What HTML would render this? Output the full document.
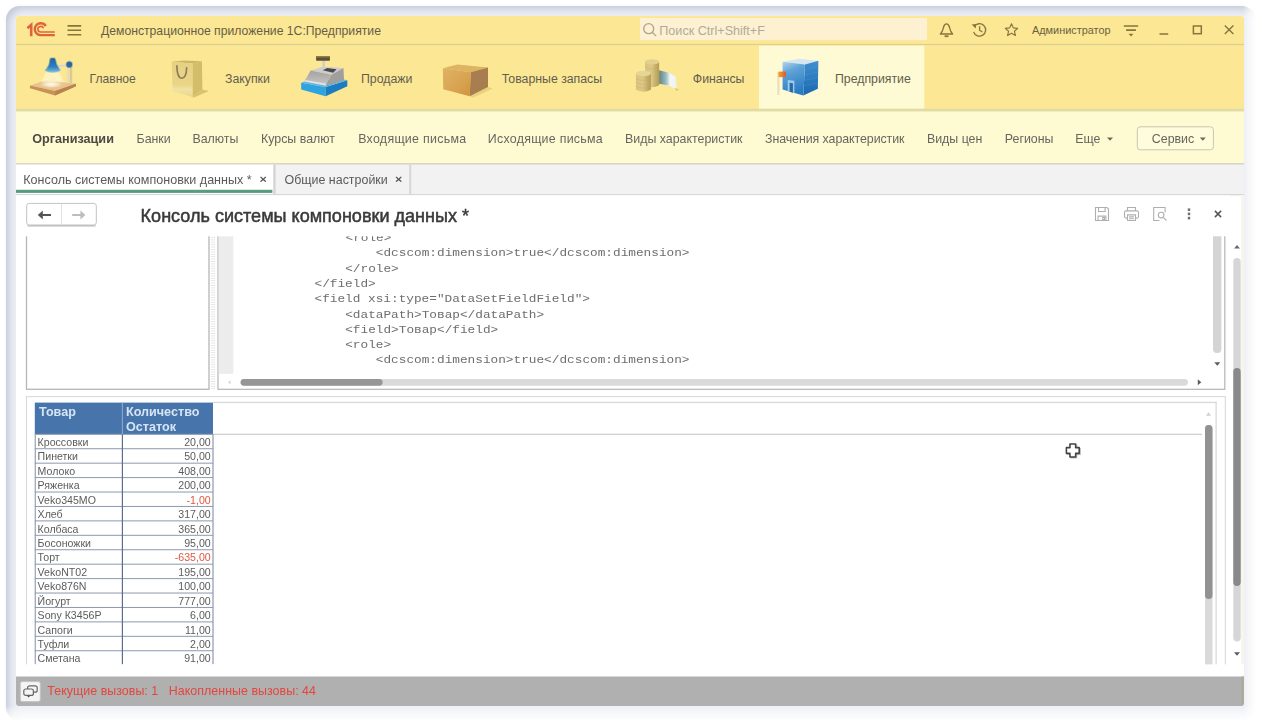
<!DOCTYPE html>
<html lang="ru">
<head>
<meta charset="utf-8">
<title>Консоль системы компоновки данных</title>
<style>
*{box-sizing:border-box;margin:0;padding:0}
html,body{width:1262px;height:724px;overflow:hidden;background:#fff}
body{font-family:"Liberation Sans",sans-serif;position:relative;color:#4a4a4a}
#frame{position:absolute;left:6px;top:6px;width:1251px;height:715px;border-radius:14px 16px 18px 14px;background:#eceef4;
 box-shadow:inset 4px 4px 7px -1px rgba(158,164,196,.52),0 0 3px rgba(240,241,247,.9)}
#fade{position:absolute;left:0;top:0;width:1262px;height:724px;
 background:linear-gradient(to right,rgba(255,255,255,0) 1243px,rgba(255,255,255,.55) 1249px,#fff 1256px),
 linear-gradient(to bottom,rgba(255,255,255,0) 705px,rgba(255,255,255,.55) 713px,#fff 721px)}
#app{position:absolute;left:16px;top:16px;width:1228px;height:690px;border-radius:3px;overflow:hidden;background:#fff;filter:blur(.7px)}
.t{position:absolute;white-space:pre}
svg.l{position:absolute;left:0;top:0;overflow:hidden}
.mono{font-family:"Liberation Mono",monospace}
</style>
</head>
<body>
<div id="frame"></div>
<div id="fade"></div>
<div id="app">

<svg class="l" width="1228" height="690" viewBox="0 0 1228 690">
<rect x="0.00" y="0.00" width="1228.00" height="29.00" fill="#fce795"/>
<rect x="0.00" y="27.90" width="1228.00" height="1.70" fill="#e0cf80"/>
<rect x="0.00" y="29.60" width="1228.00" height="64.40" fill="#fce795"/>
<rect x="743.00" y="29.60" width="165.30" height="63.40" fill="#fefad3"/>
<rect x="0.00" y="92.70" width="1228.00" height="3.00" fill="#e2dba2"/>
<rect x="0.00" y="95.70" width="1228.00" height="51.70" fill="#fefbd3"/>
<rect x="0.00" y="147.20" width="1228.00" height="1.60" fill="#cfccbc"/>
<rect x="0.00" y="148.60" width="1228.00" height="29.40" fill="#f2f2f2"/>
<rect x="0.00" y="178.00" width="1228.00" height="1.40" fill="#d8d8d8"/>
<rect x="624.00" y="2.00" width="287.00" height="22.20" fill="#fdf1d2"/>
<svg x="0.00" y="-2.00" width="60" height="30" viewBox="0 0 378.6 189.3" overflow="visible"><g fill="none" stroke="#e0643a">
<path d="M72 90 L96 68 V140" stroke-width="16"/>
<path d="M188 76 A37.5 37.5 0 1 0 154 133.5 H245" stroke-width="15"/>
<path d="M173 90 A18 18 0 1 0 156 114 H245" stroke-width="10"/></g></svg>
<path transform="translate(-16,-16)" d="M67.5 25.9H81.2M67.5 30.3H81.2M67.5 34.8H81.2" fill="none" stroke="#857639" stroke-width="1.6" />
<svg x="626.50" y="6.50" width="15" height="15" viewBox="0 0 15 15" overflow="visible"><g fill="none" stroke="#aaa590" stroke-width="1.3"><circle cx="6.2" cy="6.2" r="5"/><path d="M9.8 9.8 L13.6 13.6"/></g></svg>
<svg x="923.00" y="6.80" width="15" height="15" viewBox="0 0 15 15" overflow="visible"><g fill="none" stroke="#84763d" stroke-width="1.35" stroke-linejoin="round"><path d="M1.4 11.2 C3.8 8.8 4 6.4 4.6 4.2 C5.1 2.2 6.2 1 7.5 1 C8.8 1 9.9 2.2 10.4 4.2 C11 6.4 11.2 8.8 13.6 11.2 Z"/><path d="M5.6 13.4 H9.4" stroke-width="1.8"/></g></svg>
<svg x="955.00" y="6.40" width="16" height="15" viewBox="0 0 16 15" overflow="visible"><g fill="none" stroke="#84763d" stroke-width="1.3"><path d="M3.2 4.2 A6.2 6.2 0 1 1 2.6 9.6"/><path d="M8.6 3.8 V7.8 L11.4 9.6"/></g><path d="M0.6 2.2 L4.8 6 L5 1.6 Z" fill="#84763d"/></svg>
<svg x="988.20" y="6.60" width="14.6" height="14" viewBox="0 0 16 15" overflow="visible"><path d="M8 1.2 L10 5.6 L14.8 6.1 L11.2 9.3 L12.3 14 L8 11.5 L3.7 14 L4.8 9.3 L1.2 6.1 L6 5.6 Z" fill="none" stroke="#84763d" stroke-width="1.25" stroke-linejoin="round"/></svg>
<svg x="1107.80" y="8.90" width="14.4" height="12" viewBox="0 0 15 12" overflow="visible"><g stroke="#84763d" stroke-width="1.6"><path d="M0 1H15M2.4 5.2H12.6"/></g><path d="M5 8.9 H10 L7.5 11.8 Z" fill="#84763d"/></svg>
<path transform="translate(-16,-16)" d="M1159.5 34.0H1168.2" fill="none" stroke="#84763d" stroke-width="1.6" />
<rect x="1177.40" y="10.00" width="7.90" height="7.70" fill="none" stroke="#84763d" stroke-width="1.5"/>
<path transform="translate(-16,-16)" d="M1224.8 25.6 L1233.4 34.0 M1233.4 25.6 L1224.8 34.0" fill="none" stroke="#84763d" stroke-width="1.4" />
<svg x="10" y="32" width="70" height="60" viewBox="0 0 845 724" overflow="visible"><defs><filter id="b26" x="-10%" y="-10%" width="120%" height="120%"><feGaussianBlur stdDeviation="8"/></filter><radialGradient id="glow" cx="50%" cy="50%" r="50%"><stop offset="0" stop-color="#fffdf3"/><stop offset=".55" stop-color="#f6e3bd" stop-opacity=".9"/><stop offset="1" stop-color="#e6c18a" stop-opacity="0"/></radialGradient><linearGradient id="shade" x1="0" y1="0" x2="0" y2="1"><stop offset="0" stop-color="#22629f"/><stop offset=".6" stop-color="#2f7fc0"/><stop offset="1" stop-color="#7cc0e2"/></linearGradient></defs><g filter="url(#b26)">
<polygon points="48,452 235,388 602,432 352,520" fill="#e7c38d"/>
<polygon points="48,452 352,520 602,432 602,462 352,572 48,486" fill="#c9915a"/>
<polygon points="352,520 602,432 602,462 352,572" fill="#b98350"/>
<ellipse cx="305" cy="438" rx="165" ry="52" fill="url(#glow)"/>
<polygon points="235,295 405,295 455,410 185,410" fill="#fff8d2" opacity=".7"/>
<rect x="495" y="225" width="56" height="195" fill="#e9dcae"/>
<rect x="535" y="225" width="16" height="195" fill="#cdbb86"/>
<path d="M380 205 L520 190 L520 215 L385 232 Z" fill="#d9d6cf"/>
<circle cx="522" cy="198" r="38" fill="#2a65a2"/>
<path d="M290 125 Q322 112 352 125 L372 200 Q395 240 418 272 Q322 318 226 272 Q262 232 276 200 Z" fill="url(#shade)"/>
</g></svg>
<svg x="140" y="32" width="70" height="60" viewBox="0 0 845 724" overflow="visible"><defs><filter id="b156" x="-10%" y="-10%" width="120%" height="120%"><feGaussianBlur stdDeviation="8"/></filter><linearGradient id="bagf" x1="0" y1="0" x2="0" y2="1"><stop offset="0" stop-color="#e6d083"/><stop offset=".65" stop-color="#e9d588"/><stop offset=".78" stop-color="#f1e2a3"/><stop offset="1" stop-color="#ead68c"/></linearGradient></defs><g filter="url(#b156)">
<polygon points="560,500 640,520 450,600 440,590" fill="#d8c26e"/>
<polygon points="190,165 335,150 555,160 440,187" fill="#cdb766"/>
<polygon points="440,187 555,160 560,500 440,592" fill="#d3bc6a"/>
<polygon points="190,165 440,187 440,592 200,520" fill="url(#bagf)"/>
<path d="M252 215 Q255 365 312 365 Q365 365 370 238" fill="none" stroke="#8b7d55" stroke-width="20" stroke-linecap="round"/>
</g></svg>
<svg x="274" y="32" width="70" height="60" viewBox="0 0 845 724" overflow="visible"><defs><filter id="b290" x="-10%" y="-10%" width="120%" height="120%"><feGaussianBlur stdDeviation="8"/></filter><linearGradient id="rg" x1="0" y1="0" x2="0" y2="1"><stop offset="0" stop-color="#a3a1a0"/><stop offset="1" stop-color="#c9c7c5"/></linearGradient></defs><g filter="url(#b290)">
<rect x="392" y="150" width="30" height="90" fill="#cfcfcf"/>
<rect x="315" y="95" width="167" height="58" rx="6" fill="#5d5232"/>
<rect x="315" y="95" width="167" height="20" rx="6" fill="#8a7d50"/>
<polygon points="135,420 430,470 430,582 135,502" fill="#2fa3e0"/>
<polygon points="430,470 692,390 692,462 430,582" fill="#1a7cc0"/>
<polygon points="135,420 200,395 650,380 692,390 430,470" fill="#58b8ea"/>
<polygon points="250,270 395,225 645,240 500,322" fill="#cdcdcd"/>
<polygon points="250,270 500,322 432,452 172,405" fill="url(#rg)"/>
<polygon points="190,385 440,432 432,452 172,405" fill="#e4e2e0"/>
<polygon points="500,322 645,240 652,392 432,452" fill="#a19f9d"/>
<polygon points="395,268 450,240 562,256 522,298" fill="#484848"/>
</g></svg>
<svg x="414" y="32" width="70" height="60" viewBox="0 0 845 724" overflow="visible"><defs><filter id="b430" x="-10%" y="-10%" width="120%" height="120%"><feGaussianBlur stdDeviation="8"/></filter><linearGradient id="boxf" x1="0" y1="0" x2="1" y2="1"><stop offset="0" stop-color="#dfb264"/><stop offset=".6" stop-color="#d8a351"/><stop offset="1" stop-color="#cf9440"/></linearGradient></defs><g filter="url(#b430)">
<polygon points="480,582 700,470 760,490 520,600" fill="#e9d27e"/>
<polygon points="155,245 330,200 700,235 490,292" fill="#ddb463"/>
<polygon points="490,292 700,235 700,472 480,582" fill="#a87d4f"/>
<polygon points="155,245 490,292 480,582 160,497" fill="url(#boxf)"/>
</g></svg>
<svg x="610" y="32" width="70" height="60" viewBox="0 0 845 724" overflow="visible"><defs><filter id="b626" x="-10%" y="-10%" width="120%" height="120%"><feGaussianBlur stdDeviation="8"/></filter><linearGradient id="c1" x1="0" y1="0" x2="1" y2="0"><stop offset="0" stop-color="#d9c382"/><stop offset=".45" stop-color="#dcc884"/><stop offset="1" stop-color="#b59a55"/></linearGradient><linearGradient id="note" x1="0" y1="0" x2="1" y2="0"><stop offset="0" stop-color="#5f857a"/><stop offset=".4" stop-color="#9dbcc4"/><stop offset=".62" stop-color="#f4f7f5"/><stop offset="1" stop-color="#eef2ee"/></linearGradient></defs><g filter="url(#b626)">
<polygon points="400,268 520,300 602,345 612,505 520,452 400,432" fill="url(#note)"/>
<polygon points="585,480 640,500 612,520" fill="#d9c574"/>
<path d="M230 170 Q315 120 400 170 L400 450 Q315 500 230 450 Z" fill="url(#c1)"/>
<ellipse cx="315" cy="168" rx="85" ry="32" fill="#e3d08e"/>
<path d="M120 310 Q210 262 300 310 L300 505 Q210 552 120 505 Z" fill="url(#c1)"/>
<ellipse cx="210" cy="308" rx="90" ry="34" fill="#e6d595"/>
<g stroke="#c4aa62" stroke-width="7" fill="none" opacity=".6"><path d="M122 370 Q210 418 298 370"/><path d="M122 415 Q210 463 298 415"/><path d="M122 460 Q210 508 298 460"/><path d="M232 230 Q315 278 398 230"/></g>
</g></svg>
<svg x="750" y="32" width="70" height="60" viewBox="0 0 845 724" overflow="visible"><defs><filter id="b766" x="-10%" y="-10%" width="120%" height="120%"><feGaussianBlur stdDeviation="8"/></filter><linearGradient id="bf" x1="0" y1="0" x2="0.3" y2="1"><stop offset="0" stop-color="#b5d6ee"/><stop offset=".35" stop-color="#5fa3d8"/><stop offset="1" stop-color="#2a7cc2"/></linearGradient><linearGradient id="br" x1="0" y1="0" x2="0" y2="1"><stop offset="0" stop-color="#3f8fd0"/><stop offset="1" stop-color="#1c68ae"/></linearGradient><linearGradient id="fl" x1="0" y1="0" x2="1" y2="0"><stop offset="0" stop-color="#f0a52e"/><stop offset="1" stop-color="#e2572e"/></linearGradient></defs><g filter="url(#b766)">
<polygon points="200,165 400,130 632,155 470,200" fill="#d5e6f2"/>
<polygon points="470,200 632,155 626,492 450,572" fill="url(#br)"/>
<polygon points="200,165 470,200 450,572 200,502" fill="url(#bf)"/>
<g stroke="#5ea0d6" stroke-width="6" opacity=".55"><path d="M468 262 L630 222"/><path d="M465 326 L629 290"/><path d="M462 390 L628 356"/><path d="M458 454 L627 424"/></g>
<polygon points="262,385 342,396 342,545 262,522" fill="#9ccbee"/>
<polygon points="285,420 325,426 325,540 285,528" fill="#2c6aa2"/>
<rect x="138" y="290" width="24" height="275" fill="#e8dcbb"/>
<rect x="150" y="285" width="92" height="66" fill="url(#fl)"/>
</g></svg>
</svg>
<div class="t " style="left:85.0px;top:5.0px;height:20px;line-height:20px;font-size:12.2px;color:#655e44;font-weight:normal;">Демонстрационное приложение 1С:Предприятие</div>
<div class="t " style="left:643.3px;top:5.0px;height:20px;line-height:20px;font-size:12.6px;color:#b0ab9a;font-weight:normal;">Поиск Ctrl+Shift+F</div>
<div class="t " style="left:1016.0px;top:3.7px;height:20px;line-height:20px;font-size:10.9px;color:#6a623f;font-weight:normal;">Администратор</div>
<div class="t " style="left:73.6px;top:53.2px;height:20px;line-height:20px;font-size:12.1px;color:#625e4f;font-weight:normal;">Главное</div>
<div class="t " style="left:209.0px;top:53.2px;height:20px;line-height:20px;font-size:12.3px;color:#625e4f;font-weight:normal;">Закупки</div>
<div class="t " style="left:345.0px;top:53.2px;height:20px;line-height:20px;font-size:12.3px;color:#625e4f;font-weight:normal;">Продажи</div>
<div class="t " style="left:485.8px;top:53.2px;height:20px;line-height:20px;font-size:12.3px;color:#625e4f;font-weight:normal;">Товарные запасы</div>
<div class="t " style="left:676.8px;top:53.2px;height:20px;line-height:20px;font-size:12.3px;color:#625e4f;font-weight:normal;">Финансы</div>
<div class="t " style="left:819.0px;top:53.2px;height:20px;line-height:20px;font-size:12.3px;color:#625e4f;font-weight:normal;">Предприятие</div>
<svg class="l" width="1228" height="690" viewBox="0 0 1228 690">
<rect x="1121.30" y="110.80" width="76.10" height="23.00" fill="#fefcda" rx="3" stroke="#c9c5b2" stroke-width="1"/>
<path transform="translate(-16,-16)" d="M1107 137.4H1113L1110 140.8Z" fill="#6a6a60" />
<path transform="translate(-16,-16)" d="M1199.8 137.4H1205.8L1202.8 140.8Z" fill="#6a6a60" />
</svg>
<div class="t " style="left:16.2px;top:113.0px;height:20px;line-height:20px;font-size:12.65px;color:#4c4a42;font-weight:bold;letter-spacing:0px;">Организации</div>
<div class="t " style="left:120.5px;top:113.0px;height:20px;line-height:20px;font-size:12.4px;color:#66665f;font-weight:normal;letter-spacing:0px;">Банки</div>
<div class="t " style="left:176.4px;top:113.0px;height:20px;line-height:20px;font-size:12.4px;color:#66665f;font-weight:normal;letter-spacing:0px;">Валюты</div>
<div class="t " style="left:245.0px;top:113.0px;height:20px;line-height:20px;font-size:12.4px;color:#66665f;font-weight:normal;letter-spacing:0px;">Курсы валют</div>
<div class="t " style="left:342.2px;top:113.0px;height:20px;line-height:20px;font-size:12.4px;color:#66665f;font-weight:normal;letter-spacing:0.29px;">Входящие письма</div>
<div class="t " style="left:471.8px;top:113.0px;height:20px;line-height:20px;font-size:12.4px;color:#66665f;font-weight:normal;letter-spacing:0.27px;">Исходящие письма</div>
<div class="t " style="left:609.0px;top:113.0px;height:20px;line-height:20px;font-size:12.4px;color:#66665f;font-weight:normal;letter-spacing:0px;">Виды характеристик</div>
<div class="t " style="left:749.0px;top:113.0px;height:20px;line-height:20px;font-size:12.4px;color:#66665f;font-weight:normal;letter-spacing:-0.07px;">Значения характеристик</div>
<div class="t " style="left:910.9px;top:113.0px;height:20px;line-height:20px;font-size:12.4px;color:#66665f;font-weight:normal;letter-spacing:0px;">Виды цен</div>
<div class="t " style="left:988.8px;top:113.0px;height:20px;line-height:20px;font-size:12.4px;color:#66665f;font-weight:normal;letter-spacing:0px;">Регионы</div>
<div class="t " style="left:1059.3px;top:113.0px;height:20px;line-height:20px;font-size:12.4px;color:#66665f;font-weight:normal;letter-spacing:0px;">Еще</div>
<div class="t " style="left:1135.8px;top:113.0px;height:20px;line-height:20px;font-size:12.4px;color:#66665f;font-weight:normal;letter-spacing:0px;">Сервис</div>
<svg class="l" width="1228" height="690" viewBox="0 0 1228 690">
<rect x="0.00" y="148.70" width="257.40" height="29.10" fill="#fff"/>
<rect x="257.30" y="148.70" width="2.30" height="29.30" fill="#d5d5d5"/>
<rect x="0.00" y="173.80" width="256.40" height="3.10" fill="#5a9a7e"/>
<rect x="393.20" y="148.70" width="2.00" height="29.30" fill="#d6d6d6"/>
</svg>
<div class="t " style="left:7.3px;top:153.9px;height:20px;line-height:20px;font-size:12.55px;color:#5a5a5a;font-weight:normal;">Консоль системы компоновки данных *</div>
<div class="t " style="left:243.4px;top:154.3px;height:20px;line-height:20px;font-size:12.5px;color:#555;font-weight:bold;transform:scaleY(.82);">×</div>
<div class="t " style="left:268.5px;top:153.9px;height:20px;line-height:20px;font-size:12.45px;color:#5a5a5a;font-weight:normal;">Общие настройки</div>
<div class="t " style="left:379.0px;top:154.3px;height:20px;line-height:20px;font-size:12.5px;color:#555;font-weight:bold;transform:scaleY(.82);">×</div>
<svg class="l" width="1228" height="690" viewBox="0 0 1228 690">
<rect x="10.50" y="214.00" width="182.50" height="159.30" fill="#fff" stroke="#b6b6b6" stroke-width="1.3"/>
<path transform="translate(-16,-16)" d="M212 237V389M214.2 237V389" fill="none" stroke="#c8c8c8" stroke-width="1" stroke-dasharray="1 1.4"/>
<rect x="202.00" y="214.00" width="1006.80" height="159.30" fill="#fff" stroke="#b4b4b4" stroke-width="1.2"/>
<rect x="202.70" y="215.00" width="14.60" height="142.80" fill="#ececec"/>
</svg>
<div class="t mono" style="left:329.5px;top:212.0px;height:20px;line-height:20px;font-size:12.75px;color:#6e6e6e;font-weight:normal;transform:scaleY(.87);transform-origin:0 50%;">&lt;role&gt;</div>
<div class="t mono" style="left:359.8px;top:227.3px;height:20px;line-height:20px;font-size:12.75px;color:#6e6e6e;font-weight:normal;transform:scaleY(.87);transform-origin:0 50%;">&lt;dcscom:dimension&gt;true&lt;/dcscom:dimension&gt;</div>
<div class="t mono" style="left:329.2px;top:242.6px;height:20px;line-height:20px;font-size:12.75px;color:#6e6e6e;font-weight:normal;transform:scaleY(.87);transform-origin:0 50%;">&lt;/role&gt;</div>
<div class="t mono" style="left:298.5px;top:257.9px;height:20px;line-height:20px;font-size:12.75px;color:#6e6e6e;font-weight:normal;transform:scaleY(.87);transform-origin:0 50%;">&lt;/field&gt;</div>
<div class="t mono" style="left:298.5px;top:273.2px;height:20px;line-height:20px;font-size:12.75px;color:#6e6e6e;font-weight:normal;transform:scaleY(.87);transform-origin:0 50%;">&lt;field xsi:type="DataSetFieldField"&gt;</div>
<div class="t mono" style="left:329.2px;top:288.5px;height:20px;line-height:20px;font-size:12.75px;color:#6e6e6e;font-weight:normal;transform:scaleY(.87);transform-origin:0 50%;">&lt;dataPath&gt;Товар&lt;/dataPath&gt;</div>
<div class="t mono" style="left:329.2px;top:303.8px;height:20px;line-height:20px;font-size:12.75px;color:#6e6e6e;font-weight:normal;transform:scaleY(.87);transform-origin:0 50%;">&lt;field&gt;Товар&lt;/field&gt;</div>
<div class="t mono" style="left:329.2px;top:319.1px;height:20px;line-height:20px;font-size:12.75px;color:#6e6e6e;font-weight:normal;transform:scaleY(.87);transform-origin:0 50%;">&lt;role&gt;</div>
<div class="t mono" style="left:359.8px;top:334.4px;height:20px;line-height:20px;font-size:12.75px;color:#6e6e6e;font-weight:normal;transform:scaleY(.87);transform-origin:0 50%;">&lt;dcscom:dimension&gt;true&lt;/dcscom:dimension&gt;</div>
<svg class="l" width="1228" height="690" viewBox="0 0 1228 690">
<rect x="1197.00" y="215.00" width="8.40" height="122.00" fill="#d4d4d4" rx="4"/>
<path transform="translate(-16,-16)" d="M1214.3 362.3H1220.3L1217.3 365.8Z" fill="#5c5c5c" />
<rect x="224.60" y="362.90" width="947.40" height="6.80" fill="#dadada" rx="3.4"/>
<rect x="224.60" y="362.90" width="142.00" height="6.80" fill="#969696" rx="3.4"/>
<path transform="translate(-16,-16)" d="M1197.8 379.3V385.3L1201.3 382.3Z" fill="#5c5c5c" />
<path transform="translate(-16,-16)" d="M230.6 380.2V384.4L227.9 382.3Z" fill="#d9d9d9" />
<rect x="0.00" y="179.40" width="1214.00" height="40.90" fill="#fff"/>
<rect x="10.70" y="187.40" width="69.60" height="21.60" fill="#fff" rx="2.5" stroke="#c2c2c2" stroke-width="1"/>
<rect x="11.30" y="209.30" width="68.40" height="1.40" fill="#000" opacity="0.2"/>
<rect x="45.00" y="188.00" width="1.00" height="20.40" fill="#e2e2e2"/>
<path transform="translate(-16,-16)" d="M37.8 215 L42.8 210.6 V213.9 H51 V216.1 H42.8 V219.4 Z" fill="#555" />
<path transform="translate(-16,-16)" d="M85.4 215 L80.4 210.6 V214 H72.2 V216 H80.4 V219.4 Z" fill="#bdbdbd" />
</svg>
<div class="t " style="left:124.6px;top:190.2px;height:20px;line-height:20px;font-size:18.06px;color:#3a3a3a;font-weight:normal;-webkit-text-stroke:.5px #3a3a3a;">Консоль системы компоновки данных *</div>
<svg class="l" width="1228" height="690" viewBox="0 0 1228 690">
<svg x="1078.50" y="190.50" width="15" height="15" viewBox="0 0 15 15" overflow="visible"><g fill="none" stroke="#aeb0b0" stroke-width="1.1"><path d="M1 1 H12.4 L14 2.6 V14 H1 Z"/><path d="M4 1 V5 H10.6 V1"/><path d="M3.6 14 V9.6 H11.4 V14"/><path d="M8.2 11 H10 V13 H8.2Z"/></g></svg>
<svg x="1107.50" y="190.50" width="16" height="15" viewBox="0 0 16 15" overflow="visible"><g fill="none" stroke="#aeb0b0" stroke-width="1.1"><path d="M4 4.4 V1 H12 V4.4"/><rect x="1" y="4.4" width="14" height="7.2" rx="1.6"/><path d="M4 8.4 H12 V14 H4 Z" fill="#fff"/><path d="M5.6 10.4 H10.4 M5.6 12.2 H10.4"/></g></svg>
<svg x="1136.50" y="190.50" width="15" height="15" viewBox="0 0 15 15" overflow="visible"><g fill="none" stroke="#aeb0b0" stroke-width="1.1"><path d="M12.6 6 V1 H1.2 V14 H7"/><circle cx="8.6" cy="8.6" r="2.8"/><path d="M10.8 10.8 L14 14"/></g></svg>
<svg x="1171.00" y="192.00" width="4" height="12" viewBox="0 0 4 12" overflow="visible"><g fill="#6f6f6f"><rect x=".8" y=".4" width="2.4" height="2.6"/><rect x=".8" y="4.6" width="2.4" height="2.6"/><rect x=".8" y="8.8" width="2.4" height="2.6"/></g></svg>
<path transform="translate(-16,-16)" d="M1214.9 210.9 L1221.1 217.1 M1221.1 210.9 L1214.9 217.1" fill="none" stroke="#555" stroke-width="1.5" />
<path transform="translate(-16,-16)" d="M1234 248.4H1240L1237 244.9Z" fill="#6a6a6a" />
<rect x="1217.30" y="242.00" width="7.40" height="383.50" fill="#d6d6d6" rx="3.7"/>
<rect x="1217.30" y="352.00" width="7.40" height="218.00" fill="#898989" rx="3.7"/>
<path transform="translate(-16,-16)" d="M1234 652.2H1240L1237 655.7Z" fill="#5c5c5c" />
<rect x="1225.00" y="179.00" width="3.00" height="481.50" fill="#f6f6ee"/>
<rect x="10.50" y="380.60" width="1198.80" height="303.40" fill="#fff" stroke="#dadada" stroke-width="1.1"/>
<rect x="197.00" y="385.80" width="1003.60" height="1.30" fill="#d8d8d8"/>
<rect x="1199.50" y="385.80" width="1.20" height="278.20" fill="#d8d8d8"/>
<rect x="197.00" y="417.70" width="989.00" height="1.30" fill="#cfcfcf"/>
<path transform="translate(-16,-16)" d="M1206 415.7H1211L1208.5 412.2Z" fill="#cfcfcf" />
<rect x="1189.00" y="409.00" width="7.50" height="247.00" fill="#dadada" rx="3.7"/>
<rect x="1189.00" y="409.00" width="7.50" height="174.00" fill="#929292" rx="3.7"/>
<rect x="18.80" y="386.60" width="178.20" height="31.70" fill="#4674ab"/>
<rect x="105.80" y="386.60" width="1.20" height="31.70" fill="#86a6cf"/>
<rect x="18.80" y="417.80" width="178.20" height="1.00" fill="#8c99af"/>
<rect x="18.80" y="432.23" width="178.20" height="1.00" fill="#8c99af"/>
<rect x="18.80" y="446.66" width="178.20" height="1.00" fill="#8c99af"/>
<rect x="18.80" y="461.09" width="178.20" height="1.00" fill="#8c99af"/>
<rect x="18.80" y="475.52" width="178.20" height="1.00" fill="#8c99af"/>
<rect x="18.80" y="489.95" width="178.20" height="1.00" fill="#8c99af"/>
<rect x="18.80" y="504.38" width="178.20" height="1.00" fill="#8c99af"/>
<rect x="18.80" y="518.81" width="178.20" height="1.00" fill="#8c99af"/>
<rect x="18.80" y="533.24" width="178.20" height="1.00" fill="#8c99af"/>
<rect x="18.80" y="547.67" width="178.20" height="1.00" fill="#8c99af"/>
<rect x="18.80" y="562.10" width="178.20" height="1.00" fill="#8c99af"/>
<rect x="18.80" y="576.53" width="178.20" height="1.00" fill="#8c99af"/>
<rect x="18.80" y="590.96" width="178.20" height="1.00" fill="#8c99af"/>
<rect x="18.80" y="605.39" width="178.20" height="1.00" fill="#8c99af"/>
<rect x="18.80" y="619.82" width="178.20" height="1.00" fill="#8c99af"/>
<rect x="18.80" y="634.25" width="178.20" height="1.00" fill="#8c99af"/>
<rect x="18.70" y="418.30" width="1.10" height="230.10" fill="#8d9ab0"/>
<rect x="196.40" y="418.30" width="1.20" height="230.10" fill="#8d9ab0"/>
<rect x="105.80" y="418.30" width="1.20" height="230.10" fill="#5f6e88"/>
</svg>
<div class="t " style="left:23.0px;top:386.0px;height:20px;line-height:20px;font-size:12.6px;color:#d6e4f4;font-weight:bold;">Товар</div>
<div class="t " style="left:110.0px;top:386.0px;height:20px;line-height:20px;font-size:12.6px;color:#d6e4f4;font-weight:bold;">Количество</div>
<div class="t " style="left:110.0px;top:401.2px;height:20px;line-height:20px;font-size:12.6px;color:#d6e4f4;font-weight:bold;">Остаток</div>
<div class="t " style="left:21.6px;top:415.9px;height:20px;line-height:20px;font-size:10.6px;color:#5c5c5c;font-weight:normal;">Кроссовки</div>
<div class="t" style="left:106.4px;width:88.3px;text-align:right;top:415.9px;height:20px;line-height:20px;font-size:10.6px;color:#5c5c5c">20,00</div>
<div class="t " style="left:21.6px;top:430.3px;height:20px;line-height:20px;font-size:10.6px;color:#5c5c5c;font-weight:normal;">Пинетки</div>
<div class="t" style="left:106.4px;width:88.3px;text-align:right;top:430.3px;height:20px;line-height:20px;font-size:10.6px;color:#5c5c5c">50,00</div>
<div class="t " style="left:21.6px;top:444.8px;height:20px;line-height:20px;font-size:10.6px;color:#5c5c5c;font-weight:normal;">Молоко</div>
<div class="t" style="left:106.4px;width:88.3px;text-align:right;top:444.8px;height:20px;line-height:20px;font-size:10.6px;color:#5c5c5c">408,00</div>
<div class="t " style="left:21.6px;top:459.2px;height:20px;line-height:20px;font-size:10.6px;color:#5c5c5c;font-weight:normal;">Ряженка</div>
<div class="t" style="left:106.4px;width:88.3px;text-align:right;top:459.2px;height:20px;line-height:20px;font-size:10.6px;color:#5c5c5c">200,00</div>
<div class="t " style="left:21.6px;top:473.6px;height:20px;line-height:20px;font-size:10.6px;color:#5c5c5c;font-weight:normal;">Veko345MO</div>
<div class="t" style="left:106.4px;width:88.3px;text-align:right;top:473.6px;height:20px;line-height:20px;font-size:10.6px;color:#e2573f">-1,00</div>
<div class="t " style="left:21.6px;top:488.1px;height:20px;line-height:20px;font-size:10.6px;color:#5c5c5c;font-weight:normal;">Хлеб</div>
<div class="t" style="left:106.4px;width:88.3px;text-align:right;top:488.1px;height:20px;line-height:20px;font-size:10.6px;color:#5c5c5c">317,00</div>
<div class="t " style="left:21.6px;top:502.5px;height:20px;line-height:20px;font-size:10.6px;color:#5c5c5c;font-weight:normal;">Колбаса</div>
<div class="t" style="left:106.4px;width:88.3px;text-align:right;top:502.5px;height:20px;line-height:20px;font-size:10.6px;color:#5c5c5c">365,00</div>
<div class="t " style="left:21.6px;top:516.9px;height:20px;line-height:20px;font-size:10.6px;color:#5c5c5c;font-weight:normal;">Босоножки</div>
<div class="t" style="left:106.4px;width:88.3px;text-align:right;top:516.9px;height:20px;line-height:20px;font-size:10.6px;color:#5c5c5c">95,00</div>
<div class="t " style="left:21.6px;top:531.4px;height:20px;line-height:20px;font-size:10.6px;color:#5c5c5c;font-weight:normal;">Торт</div>
<div class="t" style="left:106.4px;width:88.3px;text-align:right;top:531.4px;height:20px;line-height:20px;font-size:10.6px;color:#e2573f">-635,00</div>
<div class="t " style="left:21.6px;top:545.8px;height:20px;line-height:20px;font-size:10.6px;color:#5c5c5c;font-weight:normal;">VekoNT02</div>
<div class="t" style="left:106.4px;width:88.3px;text-align:right;top:545.8px;height:20px;line-height:20px;font-size:10.6px;color:#5c5c5c">195,00</div>
<div class="t " style="left:21.6px;top:560.2px;height:20px;line-height:20px;font-size:10.6px;color:#5c5c5c;font-weight:normal;">Veko876N</div>
<div class="t" style="left:106.4px;width:88.3px;text-align:right;top:560.2px;height:20px;line-height:20px;font-size:10.6px;color:#5c5c5c">100,00</div>
<div class="t " style="left:21.6px;top:574.6px;height:20px;line-height:20px;font-size:10.6px;color:#5c5c5c;font-weight:normal;">Йогурт</div>
<div class="t" style="left:106.4px;width:88.3px;text-align:right;top:574.6px;height:20px;line-height:20px;font-size:10.6px;color:#5c5c5c">777,00</div>
<div class="t " style="left:21.6px;top:589.1px;height:20px;line-height:20px;font-size:10.6px;color:#5c5c5c;font-weight:normal;">Sony К3456Р</div>
<div class="t" style="left:106.4px;width:88.3px;text-align:right;top:589.1px;height:20px;line-height:20px;font-size:10.6px;color:#5c5c5c">6,00</div>
<div class="t " style="left:21.6px;top:603.5px;height:20px;line-height:20px;font-size:10.6px;color:#5c5c5c;font-weight:normal;">Сапоги</div>
<div class="t" style="left:106.4px;width:88.3px;text-align:right;top:603.5px;height:20px;line-height:20px;font-size:10.6px;color:#5c5c5c">11,00</div>
<div class="t " style="left:21.6px;top:617.9px;height:20px;line-height:20px;font-size:10.6px;color:#5c5c5c;font-weight:normal;">Туфли</div>
<div class="t" style="left:106.4px;width:88.3px;text-align:right;top:617.9px;height:20px;line-height:20px;font-size:10.6px;color:#5c5c5c">2,00</div>
<div class="t " style="left:21.6px;top:632.4px;height:20px;line-height:20px;font-size:10.6px;color:#5c5c5c;font-weight:normal;">Сметана</div>
<div class="t" style="left:106.4px;width:88.3px;text-align:right;top:632.4px;height:20px;line-height:20px;font-size:10.6px;color:#5c5c5c">91,00</div>
<svg class="l" width="1228" height="690" viewBox="0 0 1228 690">
<rect x="0.00" y="648.40" width="1228.00" height="12.60" fill="#fff"/>
<rect x="0.00" y="660.50" width="1228.00" height="29.50" fill="#b0b0b0"/>
<rect x="1225.20" y="660.50" width="2.80" height="29.50" fill="#adab9c"/>
<rect x="4.30" y="665.60" width="20.00" height="20.00" fill="#f4f4f4" rx="2" stroke="#c4c4c4" stroke-width="1"/>
<svg x="7.00" y="669.00" width="15" height="13" viewBox="0 0 15 13" overflow="visible"><g fill="#f4f4f4" stroke="#666" stroke-width="1.2"><rect x="4.6" y=".8" width="9.6" height="6.4" rx="2"/><rect x=".8" y="4" width="9.6" height="6.4" rx="2"/></g><path d="M4 10.8H7.2L5.6 12.6Z" fill="#444"/></svg>
</svg>
<div class="t " style="left:31.3px;top:665.3px;height:20px;line-height:20px;font-size:12.4px;color:#e4463e;font-weight:normal;letter-spacing:.05px;">Текущие вызовы: 1   Накопленные вызовы: 44</div>
<svg class="l" width="1228" height="690" viewBox="0 0 1228 690">
<svg x="1048.60" y="426.60" width="16.4" height="15.8" viewBox="0 0 15 15" overflow="visible"><path d="M4.8 1.4 H10.2 V4.8 H13.6 V10.2 H10.2 V13.6 H4.8 V10.2 H1.4 V4.8 H4.8 Z" fill="#000" opacity=".25" transform="translate(1,1)" stroke="#000" stroke-width="1.2"/><path d="M4.8 1.4 H10.2 V4.8 H13.6 V10.2 H10.2 V13.6 H4.8 V10.2 H1.4 V4.8 H4.8 Z" fill="#fff" stroke="#444" stroke-width="1.5" stroke-linejoin="round"/></svg>
</svg>
</div>
</body>
</html>
